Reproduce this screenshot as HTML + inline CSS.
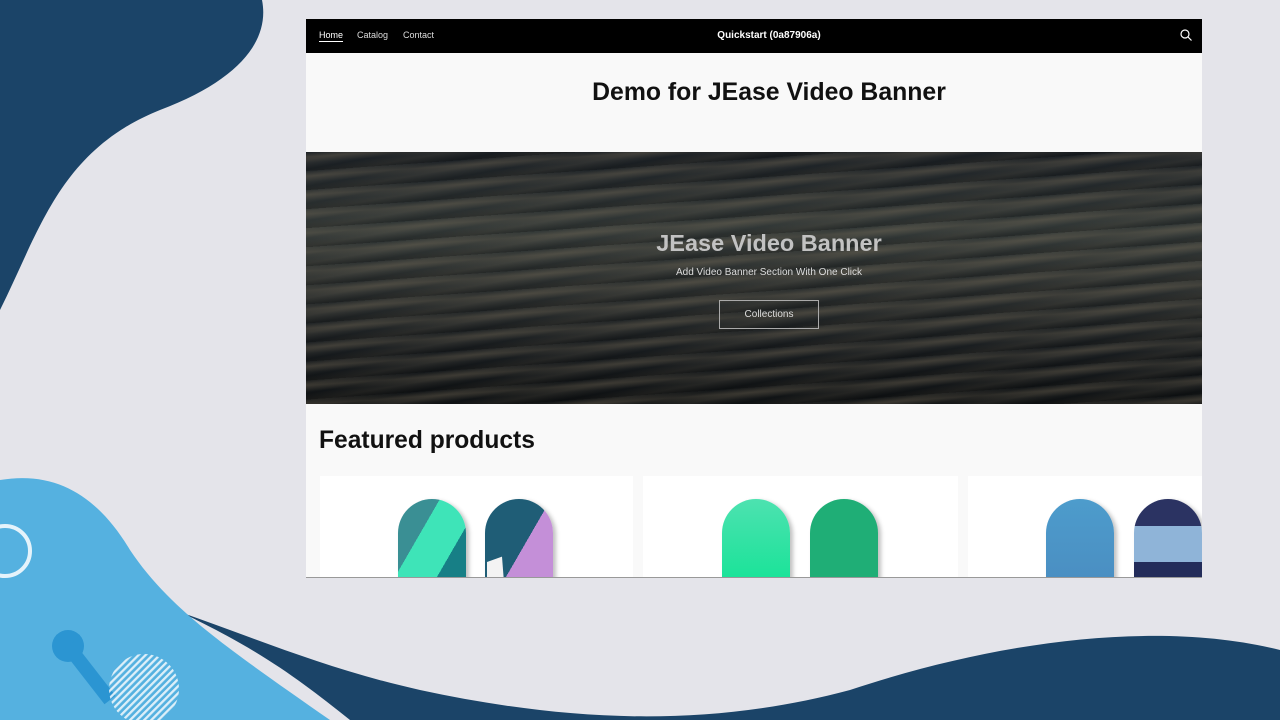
<!DOCTYPE html>
<html><head><meta charset="utf-8"><style>
*{margin:0;padding:0;box-sizing:border-box}
body{width:1280px;height:720px;overflow:hidden;background:#e4e4ea;font-family:"Liberation Sans",sans-serif;position:relative}
.bg{position:absolute;left:0;top:0}
.frame{position:absolute;left:306px;top:19px;width:896px;height:559px;background:#f9f9f9;overflow:hidden;border-bottom:1px solid #999}
.nav{height:34px;background:#000;color:#fff;position:relative;font-size:9px}
.nav a{position:absolute;top:11px;color:#ddd}
.nav .home{left:13px;color:#fff;border-bottom:1px solid #fff;padding-bottom:1px}
.c{position:absolute;left:30px;right:0;text-align:center}
.nav .t{top:11px;font-weight:bold;font-size:10px}
h1{top:60px;font-size:24.8px;font-weight:bold;color:#111}
.video{position:absolute;top:133px;left:0;width:896px;height:252px;background:
repeating-linear-gradient(176deg,rgba(0,0,0,0) 0,rgba(140,125,100,.22) 5px,rgba(0,0,0,0) 11px,rgba(0,0,0,.25) 19px),
repeating-linear-gradient(170deg,rgba(0,0,0,0) 0,rgba(150,135,110,.15) 8px,rgba(0,0,0,0) 17px),
linear-gradient(180deg,#1a1f24 0%,#323837 30%,#2a2e2e 55%,#181c1f 80%,#0f1214 100%)}
.video .h{top:78px;color:#c2c2c2;font-size:23.5px;font-weight:bold}
.video .s{top:115px;color:#ddd;font-size:10px}
.video .b{position:absolute;left:413px;top:148px;width:100px;height:29px;border:1px solid #aaa;color:#ddd;font-size:10px;text-align:center;line-height:27px}
h2{position:absolute;top:408px;left:13px;font-size:24.6px;font-weight:bold;color:#111}
.card{position:absolute;top:457px;height:110px;background:#fff}
.bd{position:absolute;top:480px;width:68px;height:90px;border-radius:34px 34px 0 0;box-shadow:3px 2px 4px rgba(0,0,0,.25);overflow:hidden}
</style></head><body>
<svg class="bg" width="1280" height="720">
<path d="M0 0H262C270 40 240 80 160 110C60 150 40 230 0 310Z" fill="#1b4468"/>
<path d="M180 612C260 650 300 680 350 720H1280V650C1160 620 1000 640 850 690C700 730 560 720 420 690C330 670 260 640 180 612Z" fill="#1b4468"/>
<path d="M0 480C60 470 100 500 130 550C170 610 230 650 330 720H0Z" fill="#55b1e0"/>
<circle cx="5" cy="551" r="25" fill="none" stroke="#fff" stroke-width="4" opacity=".85"/>
<circle cx="68" cy="646" r="16" fill="#2b95d2"/>
<path d="M68 646L110 700" stroke="#2b95d2" stroke-width="14"/>
<defs><pattern id="st" width="5" height="5" patternUnits="userSpaceOnUse" patternTransform="rotate(-45)"><rect width="5" height="2.3" fill="#fff"/></pattern></defs>
<circle cx="144" cy="689" r="35" fill="url(#st)" opacity=".8"/>
</svg>
<div class="frame">
<div class="nav"><a class="home">Home</a><a style="left:51px">Catalog</a><a style="left:97px">Contact</a>
<div class="t c">Quickstart (0a87906a)</div>
<svg style="position:absolute;right:10px;top:10px" width="12" height="12" viewBox="0 0 12 12"><circle cx="5" cy="5" r="4" fill="none" stroke="#fff" stroke-width="1.2"/><path d="M8 8L11.5 11.5" stroke="#fff" stroke-width="1.2"/></svg></div>
<h1 class="c">Demo for JEase Video Banner</h1>
<div class="video"><div class="h c">JEase Video Banner</div><div class="s c">Add Video Banner Section With One Click</div><div class="b">Collections</div></div>
<h2>Featured products</h2>
<div class="card" style="left:14px;width:313px"></div>
<div class="card" style="left:337px;width:315px"></div>
<div class="card" style="left:662px;width:240px"></div>
<div class="bd" style="left:92px;background:linear-gradient(120deg,#3a8f94 0 35%,#3ee4b8 35% 70%,#177f86 70%)"></div>
<div class="bd" style="left:179px;background:linear-gradient(120deg,#1f5d76 0 55%,#c48fd8 55%)"><div style="position:absolute;left:2px;bottom:0;width:50px;height:36px;background:#f3f3f3;clip-path:polygon(0 25%,30% 10%,35% 100%,0 100%)"></div></div>
<div class="bd" style="left:416px;background:linear-gradient(180deg,#4de2b0,#14e396)"></div>
<div class="bd" style="left:504px;background:#1fae76"></div>
<div class="bd" style="left:740px;background:linear-gradient(180deg,#4d9ccc,#4a8dc1)"></div>
<div class="bd" style="left:828px;background:linear-gradient(180deg,#2b3362 0 30%,#8fb4d8 30% 70%,#232c5a 70%)"></div>
</div>
</body></html>
